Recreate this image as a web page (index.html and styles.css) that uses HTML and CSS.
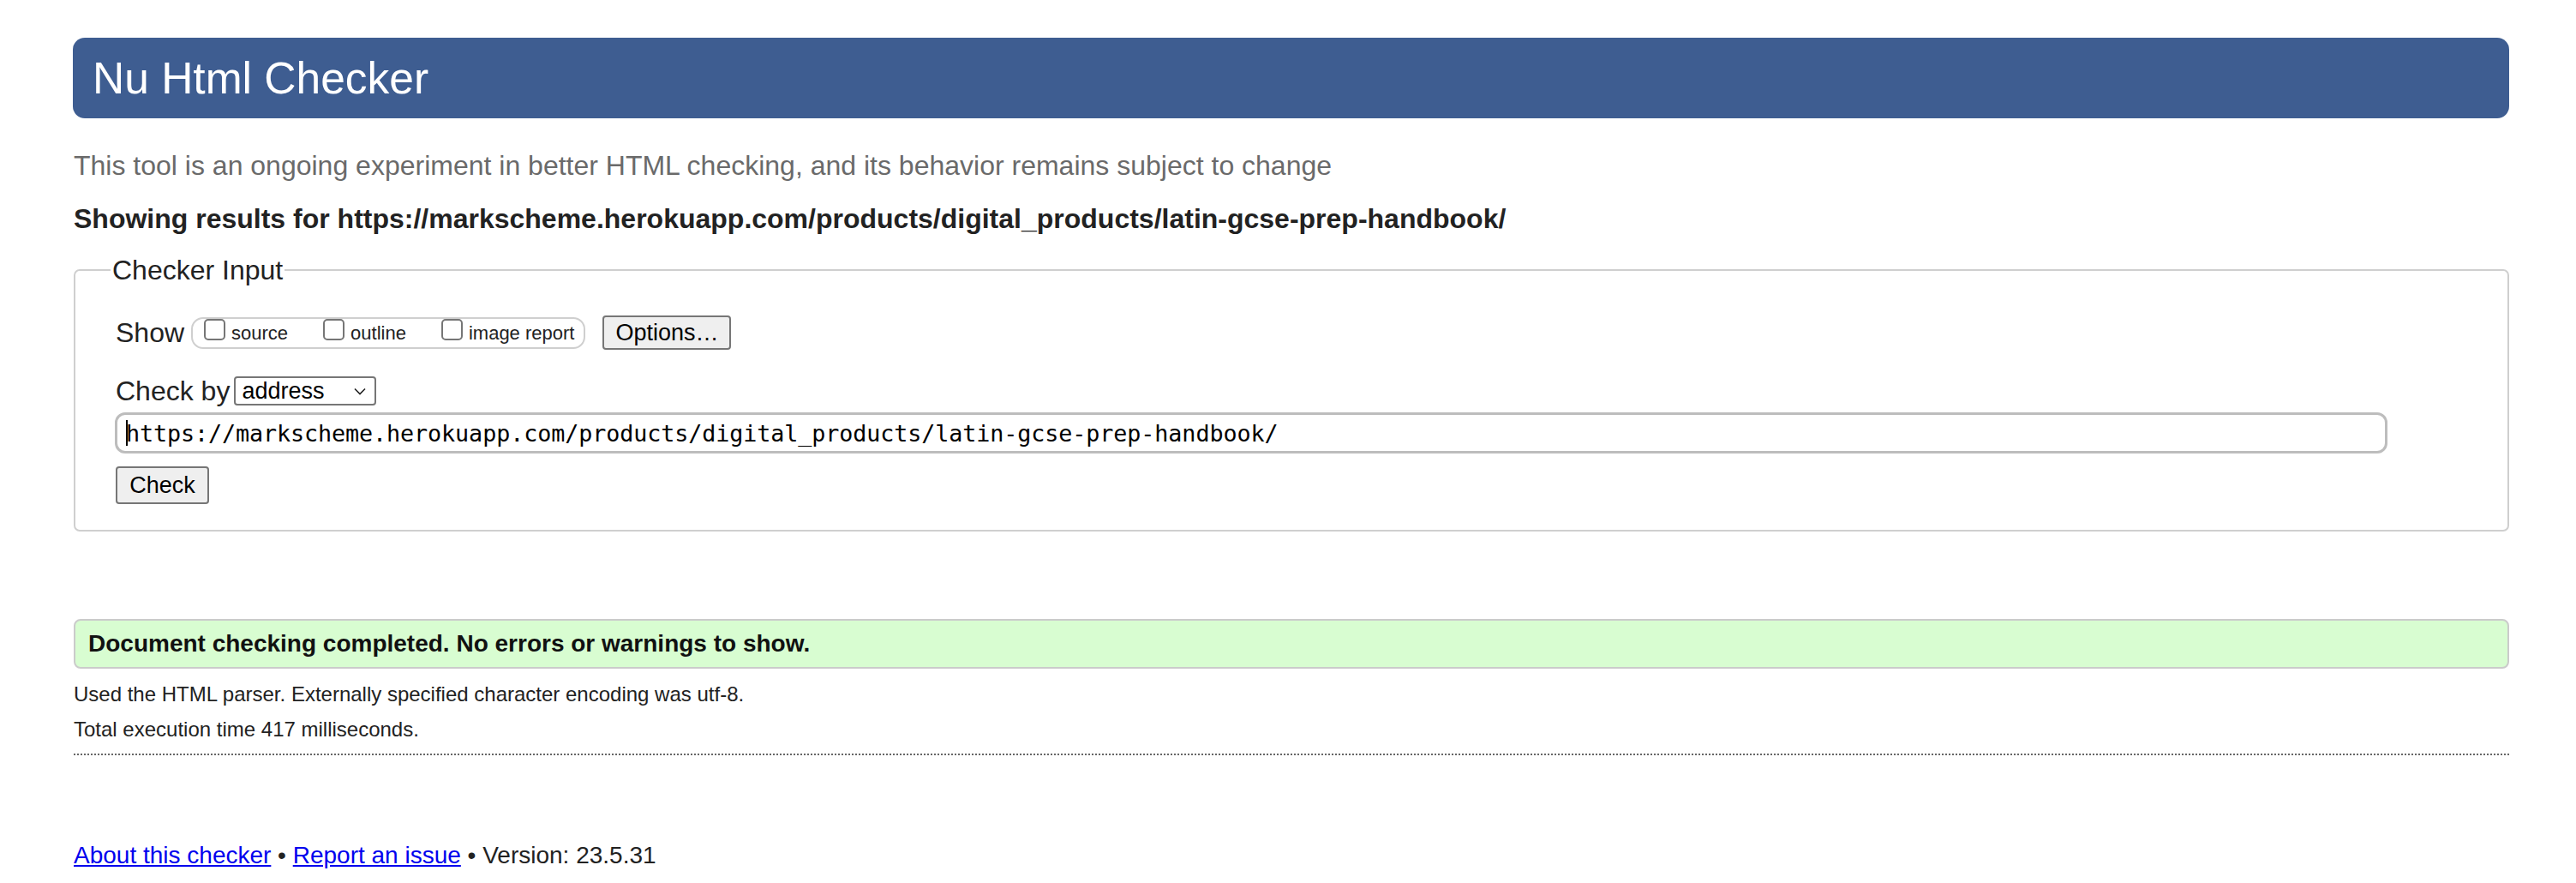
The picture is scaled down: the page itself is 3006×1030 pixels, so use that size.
FILE: index.html
```html
<!DOCTYPE html>
<html lang="en">
<head>
<meta charset="utf-8">
<title>Nu Html Checker</title>
<link rel="stylesheet" href="styles.css">
</head>
<body>
<h1 class="title">Nu Html Checker</h1>
<p class="intro">This tool is an ongoing experiment in better HTML checking, and its behavior remains subject to change</p>
<p class="showing">Showing results for https://markscheme.herokuapp.com/products/digital_products/latin-gcse-prep-handbook/</p>
<fieldset class="checker">
  <legend class="legend">Checker Input</legend>
  <div class="row show-row">
    <span class="lbl">Show</span>
    <span class="group">
      <label class="opt"><span class="cb"></span>source</label>
      <label class="opt"><span class="cb"></span>outline</label>
      <label class="opt"><span class="cb"></span>image report</label>
    </span>
    <span class="btn options">Options…</span>
  </div>
  <div class="row by-row">
    <span class="lbl">Check by</span>
    <span class="select">address<svg class="chev" width="14" height="9" viewBox="0 0 14 9"><path d="M1 1.5 L7 7.5 L13 1.5" fill="none" stroke="#222" stroke-width="1.6"/></svg></span>
  </div>
  <div class="url"><span class="caret"></span>https://markscheme.herokuapp.com/products/digital_products/latin-gcse-prep-handbook/</div>
  <span class="btn check">Check</span>
</fieldset>
<div class="success">Document checking completed. No errors or warnings to show.</div>
<p class="small first">Used the HTML parser. Externally specified character encoding was utf-8.</p>
<p class="small">Total execution time 417 milliseconds.</p>
<div class="rule"></div>
<p class="footer"><a href="#">About this checker</a> • <a href="#">Report an issue</a> • Version: 23.5.31</p>
</body>
</html>
```
FILE: styles.css
```css
html, body {
  margin: 0;
  background: #fff;
}
body {
  padding: 44px 78px 0 86px;
  font-family: "Liberation Sans", Arial, Helvetica, sans-serif;
  color: #222;
}
.title {
  margin: 0 0 0 -1px;
  height: 94px;
  line-height: 94px;
  padding-left: 23px;
  font-size: 51.5px;
  font-weight: normal;
  color: #fff;
  background: #3e5d91;
  border-radius: 14px;
}
.intro {
  margin: 39px 0 0;
  font-size: 32px;
  line-height: 32px;
  color: #6a6a6a;
}
.showing {
  margin: 30px 0 0;
  font-size: 32px;
  line-height: 32px;
  font-weight: bold;
  color: #222;
}
.checker {
  margin: 27px 0 0;
  padding: 0 0 30px 47px;
  border: 2px solid #cfcfcf;
  border-radius: 7px;
  min-width: 0;
}
.legend {
  margin-left: -6px;
  padding: 0 2px;
  font-size: 32px;
  line-height: 34px;
  color: #222;
}
.row {
  display: flex;
  align-items: center;
}
.lbl {
  font-size: 32px;
  line-height: 34px;
  color: #222;
}
.show-row {
  margin-top: 36px;
  height: 40px;
}
.group {
  display: flex;
  align-items: flex-end;
  margin-left: 8px;
  height: 33px;
  padding: 0 11px 0 13px;
  border: 2px solid #cfcfcf;
  border-radius: 14px;
  gap: 41px;
}
.opt {
  display: flex;
  align-items: flex-end;
  font-size: 22px;
  line-height: 22px;
  padding-bottom: 5px;
  color: #222;
}
.cb {
  width: 21px;
  height: 21px;
  margin-right: 7px;
  margin-bottom: 3px;
  border: 2px solid #767676;
  border-radius: 5px;
  background: #fff;
}
.btn {
  display: inline-flex;
  align-items: center;
  justify-content: center;
  box-sizing: border-box;
  font-size: 27px;
  color: #000;
  background: #efefef;
  border: 2px solid #767676;
  border-radius: 4px;
}
.options {
  margin-left: 20px;
  width: 150px;
  height: 40px;
}
.by-row {
  margin-top: 31px;
  height: 34px;
}
.select {
  display: inline-flex;
  align-items: center;
  justify-content: space-between;
  box-sizing: border-box;
  margin-left: 5px;
  width: 166px;
  height: 34px;
  padding: 0 10px 0 7px;
  font-size: 27px;
  color: #000;
  background: #fff;
  border: 2px solid #767676;
  border-radius: 4px;
}
.chev {
  display: block;
}
.url {
  display: flex;
  align-items: center;
  box-sizing: border-box;
  margin: 8px 140px 0 -1px;
  height: 48px;
  padding-left: 10px;
  font-family: "DejaVu Sans Mono", "Liberation Mono", monospace;
  font-size: 26.75px;
  letter-spacing: -0.1px;
  color: #000;
  border: 3px solid #bdbdbd;
  border-radius: 12px;
}
.caret {
  width: 2px;
  height: 30px;
  margin-right: -2px;
  background: #000;
}
.check {
  margin: 15px 0 0 0;
  width: 109px;
  height: 44px;
}
.success {
  margin-top: 102px;
  box-sizing: border-box;
  height: 58px;
  padding-left: 15px;
  line-height: 54px;
  font-size: 28px;
  font-weight: bold;
  color: #111;
  background: #d8fdd1;
  border: 2px solid #cbcbcb;
  border-radius: 8px;
}
.small {
  margin: 0;
  font-size: 24px;
  line-height: 41px;
  color: #222;
}
.small.first {
  margin-top: 9px;
}
.rule {
  margin-top: 8px;
  border-top: 2px dotted #666;
}
.footer {
  margin: 100px 0 0;
  font-size: 28px;
  line-height: 34px;
  color: #222;
}
.footer a {
  color: #0000ee;
}
```
